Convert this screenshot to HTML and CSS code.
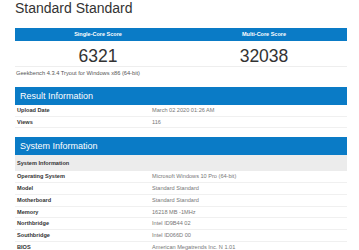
FILE: index.html
```html
<!DOCTYPE html>
<html lang="en">
<head>
  <meta charset="UTF-8">
  <meta name="viewport" content="width=device-width, initial-scale=1.0">
  <title>Standard Standard - Geekbench Browser</title>
  <link rel="stylesheet" href="styles.css">
</head>
<body>
  <div class="page">
    <h1 class="title">Standard Standard</h1>

    <!-- Scores -->
    <div class="scores">
      <div class="score-head">
        <div>Single-Core Score</div>
        <div>Multi-Core Score</div>
      </div>
      <div class="score-values">
        <div>6321</div>
        <div>32038</div>
      </div>
    </div>
    <div class="version">Geekbench 4.3.4 Tryout for Windows x86 (64-bit)</div>

    <!-- Result Information -->
    <div class="section">
      <h2 class="section-head">Result Information</h2>
      <div class="row"><span class="label">Upload Date</span><span class="value">March 02 2020 01:26 AM</span></div>
      <div class="row"><span class="label">Views</span><span class="value">116</span></div>
    </div>

    <!-- System Information -->
    <div class="section">
      <h2 class="section-head">System Information</h2>
      <div class="row sub"><span class="label">System Information</span></div>
      <div class="row"><span class="label">Operating System</span><span class="value">Microsoft Windows 10 Pro (64-bit)</span></div>
      <div class="row"><span class="label">Model</span><span class="value">Standard Standard</span></div>
      <div class="row"><span class="label">Motherboard</span><span class="value">Standard Standard</span></div>
      <div class="row"><span class="label">Memory</span><span class="value">16218 MB -1MHz</span></div>
      <div class="row"><span class="label">Northbridge</span><span class="value">Intel ID9B44 02</span></div>
      <div class="row"><span class="label">Southbridge</span><span class="value">Intel ID066D 00</span></div>
      <div class="row"><span class="label">BIOS</span><span class="value">American Megatrends Inc. N 1.01</span></div>
    </div>
  </div>
</body>
</html>
```

FILE: styles.css
```css
body {
  margin: 0;
  background: #fff;
  font-family: "Liberation Sans", Arial, sans-serif;
  color: #333;
  overflow: hidden;
}
.page {
  padding: 0 12px 0 15px;
}
.title {
  margin: 0;
  font-size: 14px;
  line-height: 17px;
  font-weight: normal;
  color: #333;
}
.scores {
  margin-top: 11px;
  border-bottom: 1px solid #eee;
}
.score-head {
  display: grid;
  grid-template-columns: 1fr 1fr;
  background: #0a7bc6;
  color: #fff;
  font-size: 5.5px;
  font-weight: bold;
  line-height: 13px;
  text-align: center;
}
.score-values {
  display: grid;
  grid-template-columns: 1fr 1fr;
  padding-top: 5px;
  font-size: 17.5px;
  line-height: 20px;
  text-align: center;
  color: #333;
}
.version {
  padding: 2px 1px 0;
  font-size: 5.7px;
  line-height: 8px;
  color: #555;
}
.section {
  margin-top: 10px;
}
.section + .section {
  margin-top: 9px;
}
.section-head {
  margin: 0;
  padding-left: 5px;
  background: #0a7bc6;
  color: #fff;
  font-size: 9px;
  font-weight: normal;
  line-height: 18px;
}
.row {
  display: grid;
  grid-template-columns: 135px 1fr;
  padding-left: 2px;
  font-size: 5.6px;
  line-height: 10.7px;
  border-bottom: 1px solid #f0f0f0;
}
.row .label {
  font-weight: bold;
  color: #333;
}
.row .value {
  color: #777;
}
.row.sub {
  background: #ececec;
  line-height: 16px;
  border-bottom: none;
}
```
